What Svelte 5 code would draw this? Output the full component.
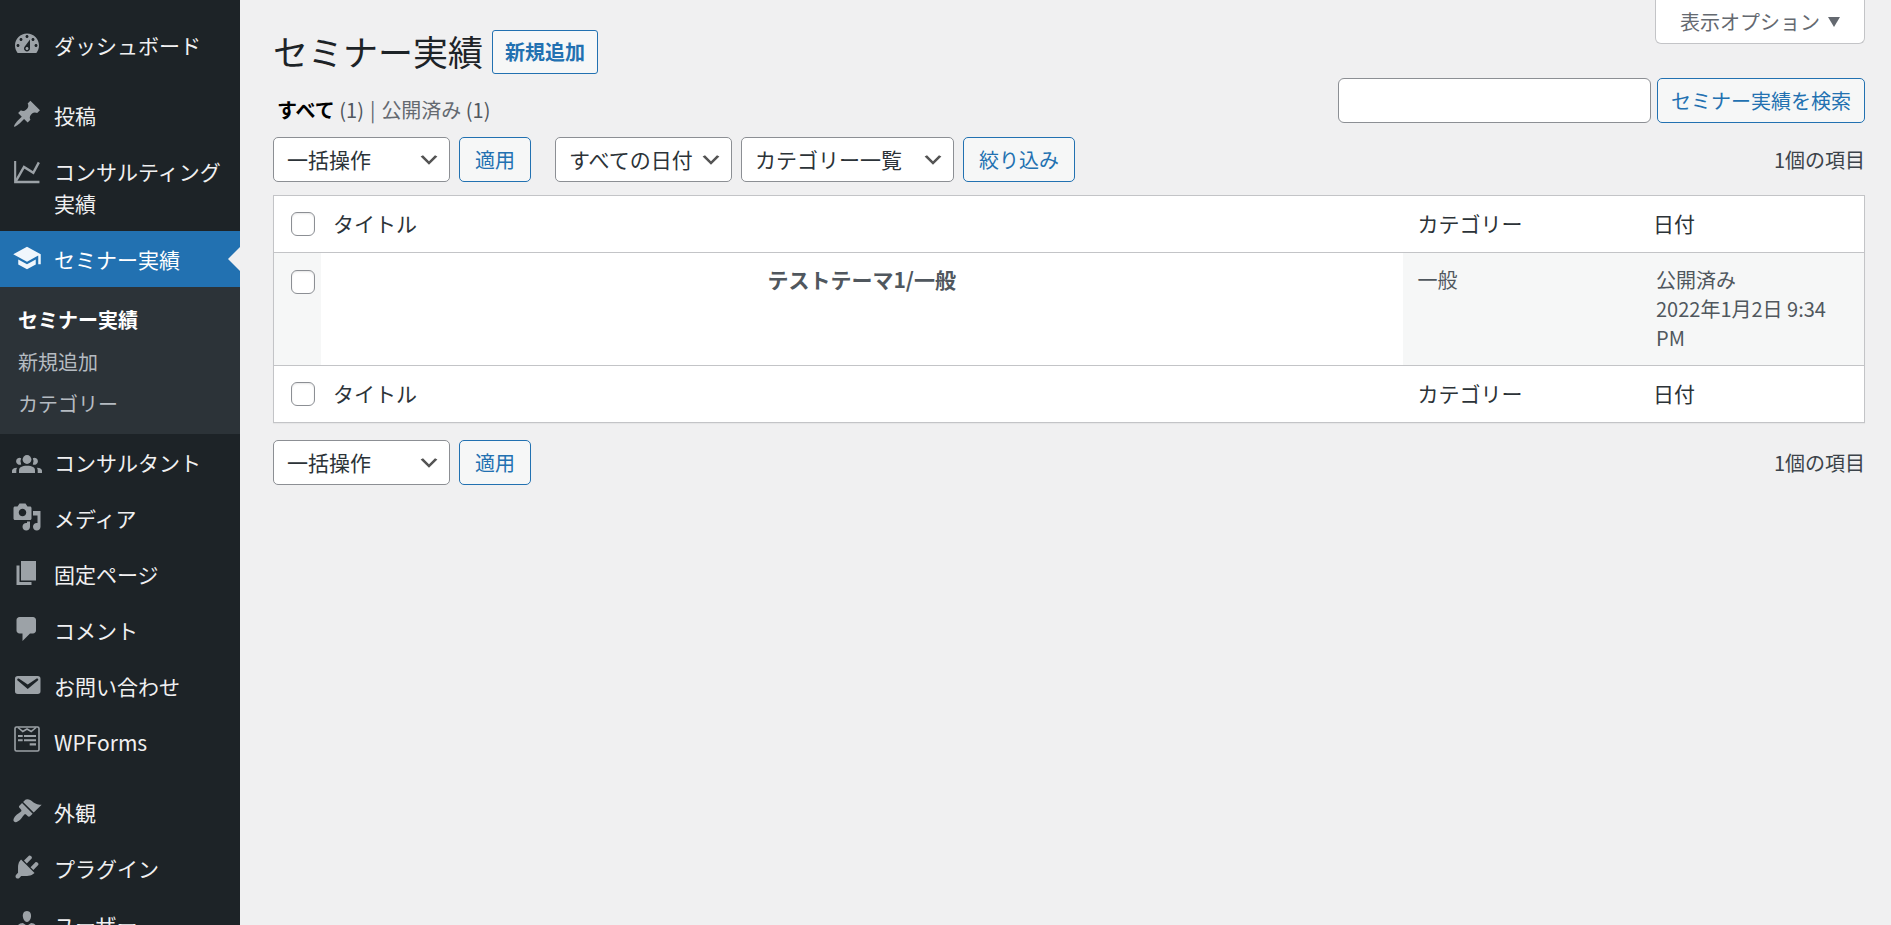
<script lang="ts">
  type MenuItem = {
    label: string;
    icon: string;
    current?: boolean;
    separated?: boolean;
  };

  const menu: MenuItem[] = [
    { label: "ダッシュボード", icon: "dashboard" },
    { label: "投稿", icon: "post", separated: true },
    { label: "コンサルティング実績", icon: "chart" },
    { label: "セミナー実績", icon: "school", current: true },
    { label: "コンサルタント", icon: "groups" },
    { label: "メディア", icon: "media" },
    { label: "固定ページ", icon: "page" },
    { label: "コメント", icon: "comment" },
    { label: "お問い合わせ", icon: "mail" },
    { label: "WPForms", icon: "forms" },
    { label: "外観", icon: "appearance", separated: true },
    { label: "プラグイン", icon: "plugin" },
    { label: "ユーザー", icon: "user" },
  ];

  const submenu = ["セミナー実績", "新規追加", "カテゴリー"];

  const paths: Record<string, string> = {
    dashboard:
      "M3.76 16h12.48c1.1-1.37 1.76-3.11 1.76-5 0-4.42-3.58-8-8-8s-8 3.58-8 8c0 1.89.66 3.63 1.76 5zM10 4c.55 0 1 .45 1 1s-.45 1-1 1-1-.45-1-1 .45-1 1-1zM6 6c.55 0 1 .45 1 1s-.45 1-1 1-1-.45-1-1 .45-1 1-1zm8 0c.55 0 1 .45 1 1s-.45 1-1 1-1-.45-1-1 .45-1 1-1zm-5.37 5.55L12 7v6c0 1.1-.9 2-2 2s-2-.9-2-2c0-.57.24-1.08.63-1.45zM4 10c.55 0 1 .45 1 1s-.45 1-1 1-1-.45-1-1 .45-1 1-1zm12 0c.55 0 1 .45 1 1s-.45 1-1 1-1-.45-1-1 .45-1 1-1zm-5 3c0-.55-.45-1-1-1s-1 .45-1 1 .45 1 1 1 1-.45 1-1z",
    post: "M10.44 3.02l1.82-1.82 6.36 6.35-1.83 1.82c-1.05-.68-2.48-.57-3.41.36l-.75.75c-.92.93-1.04 2.35-.35 3.41l-1.83 1.82-2.41-2.41-2.8 2.79c-.42.42-3.38 2.71-3.8 2.29s1.86-3.39 2.28-3.81l2.79-2.79L4.1 9.36l1.83-1.82c1.05.69 2.48.57 3.4-.36l.75-.75c.93-.92 1.05-2.35.36-3.41z",
    media:
      "M13 11V4c0-.55-.45-1-1-1h-1.67L9 1H5L3.67 3H2c-.55 0-1 .45-1 1v7c0 .55.45 1 1 1h10c.55 0 1-.45 1-1zM7 4.5c1.38 0 2.5 1.12 2.5 2.5S8.38 9.5 7 9.5 4.5 8.38 4.5 7 5.62 4.5 7 4.5zM14 6h5v10.5c0 1.38-1.12 2.5-2.5 2.5S14 17.88 14 16.5s1.12-2.5 2.5-2.5c.17 0 .34.02.5.05V9h-3V6zm-4 8.05V13h2v3.5c0 1.38-1.12 2.5-2.5 2.5S7 17.88 7 16.5 8.12 14 9.5 14c.17 0 .34.02.5.05z",
    page: "M6 15V2h10v13H6zm-1 1h8v2H3V5h2v11z",
    comment: "M5 2h9c1.1 0 2 .9 2 2v7c0 1.1-.9 2-2 2h-2l-5 5v-5H5c-1.1 0-2-.9-2-2V4c0-1.1.9-2 2-2z",
    mail: "M3.87 4h13.25C18.37 4 19 4.59 19 5.79v8.42c0 1.19-.63 1.79-1.88 1.79H3.87c-1.25 0-1.88-.6-1.88-1.79V5.79c0-1.2.63-1.79 1.88-1.79zm6.62 8.6l6.74-5.53c.24-.2.43-.66.13-1.07-.29-.41-.82-.42-1.17-.17l-5.7 3.86L4.8 5.83c-.35-.25-.88-.24-1.17.17-.3.41-.11.87.13 1.07z",
    appearance:
      "M14.48 11.06L7.41 3.99l1.5-1.5c.5-.56 2.3-.47 3.51.32 1.21.8 1.43 1.28 2.91 2.1 1.18.64 2.45 1.26 4.45.85zm-.71.71L6.7 4.7 4.93 6.47c-.39.39-.39 1.02 0 1.41l1.06 1.06c.39.39.39 1.03 0 1.42-.6.6-1.43 1.11-2.21 1.69-.35.26-.7.53-1.01.84C1.43 14.23.4 16.08 1.4 17.07c.99 1 2.84-.03 4.18-1.36.31-.31.58-.66.85-1.02.57-.78 1.08-1.61 1.69-2.21.39-.39 1.02-.39 1.41 0l1.06 1.06c.39.39 1.02.39 1.41 0z",
    plugin:
      "M13.11 4.36L9.87 7.6 8 5.73l3.24-3.24c.35-.34 1.05-.2 1.56.32.52.51.66 1.21.31 1.55zm-8 1.77l.91-1.12 9.01 9.01-1.19.84c-.71.71-2.63 1.16-3.82 1.16H6.14L4.9 17.26c-.59.59-1.54.59-2.12 0-.59-.58-.59-1.53 0-2.12l1.24-1.24v-3.88c0-1.13.4-3.19 1.09-3.89zm7.26 3.97l3.24-3.24c.34-.35 1.04-.21 1.55.31.52.51.66 1.21.31 1.55l-3.24 3.25z",
    user: "M10 9.25c-2.27 0-2.73-3.44-2.73-3.44C7 4.02 7.82 2 9.97 2c2.16 0 2.98 2.02 2.71 3.81 0 0-.41 3.44-2.68 3.44zm0 2.57L12.72 10c2.39 0 4.52 2.33 4.52 4.53v2.49s-3.65 1.13-7.24 1.13c-3.65 0-7.24-1.13-7.24-1.13v-2.49c0-2.25 1.94-4.48 4.47-4.48z",
  };

  let keyword = $state("");
  let checked = $state(false);

  const toggleAll = (event: Event): void => {
    checked = (event.currentTarget as HTMLInputElement).checked;
  };
</script>

{#snippet menuIcon(name: string)}
  {#if name === "school"}
    <svg class="icon" viewBox="0 0 24 24" aria-hidden="true">
      <path d="M5 13.18v4L12 21l7-3.82v-4L12 17l-7-3.82zM12 3L1 9l11 6 9-4.91V17h2V9L12 3z" />
    </svg>
  {:else if name === "chart"}
    <svg class="icon" viewBox="0 0 20 20" aria-hidden="true">
      <path d="M1.4 4h1.4v13.2h15.5v1.6H1.4z" />
      <path class="line" d="M2.6 17.4L8 8l6.2 3.9 3.7-7" />
    </svg>
  {:else if name === "groups"}
    <svg class="icon" viewBox="0 0 30 30" aria-hidden="true">
      <circle cx="15" cy="13.5" r="4.4" />
      <path d="M7 27v-2.6c0-3.2 2.8-4.7 8-4.7s8 1.5 8 4.7V27z" />
      <path d="M9.2 12.2a3.5 3.5 0 1 0 0 6.2 6.5 6.5 0 0 1 0-6.2zM20.8 12.2a3.5 3.5 0 1 1 0 6.2 6.5 6.5 0 0 0 0-6.2z" />
      <path d="M0 27v-2.2c0-1.8 1.4-2.9 5.2-3.1-.7.9-.9 1.8-.9 2.9V27zM30 27v-2.2c0-1.8-1.4-2.9-5.2-3.1.7.9.9 1.8.9 2.9V27z" />
    </svg>
  {:else if name === "forms"}
    <svg class="icon" viewBox="0 0 30 30" aria-hidden="true">
      <rect class="line" x="3" y="1" width="24" height="24" rx="1.5" />
      <path class="line" d="M6 1.5l4.8 4L15 3l4.2 2.5 4.8-4" />
      <path d="M6 9h4.7v2H6zM12 9h12v2H12zM6 13.2h4.7v2H6zM12 13.2h12v2H12zM17.7 17.2H24v2.2h-6.3z" />
    </svg>
  {:else}
    <svg class="icon" viewBox="0 0 20 20" aria-hidden="true">
      <path d={paths[name]} />
    </svg>
  {/if}
{/snippet}

{#snippet bulkActions(position: string)}
  <select class="select" aria-label="一括操作を選択 ({position})">
    <option>一括操作</option>
  </select>
  <button type="button" class="button">適用</button>
{/snippet}

{#snippet headings(position: string)}
  <tr>
    <th class="check"><input type="checkbox" aria-label="すべて選択 ({position})" {checked} onchange={toggleAll} /></th>
    <th class="sortable title" scope="col"><a href="#title">タイトル</a></th>
    <th class="category" scope="col">カテゴリー</th>
    <th class="sortable date" scope="col"><a href="#date">日付</a></th>
  </tr>
{/snippet}

<div class="admin">
  <nav class="sidebar" aria-label="メインメニュー">
    <ul class="menu">
      {#each menu as item}
        <li class:separated={item.separated}>
          <a class="menu-link" class:current={item.current} href="#{item.icon}">
            {@render menuIcon(item.icon)}
            <span>{item.label}</span>
          </a>
          {#if item.current}
            <ul class="submenu">
              {#each submenu as label, i}
                <li><a class:active={i === 0} href="#sub-{i}">{label}</a></li>
              {/each}
            </ul>
          {/if}
        </li>
      {/each}
    </ul>
  </nav>

  <main class="content">
    <header class="top">
      <div class="heading">
        <h1>セミナー実績</h1>
        <a class="add-new" href="#new">新規追加</a>
      </div>
      <button type="button" class="screen-options">
        表示オプション
        <svg viewBox="0 0 12 10" aria-hidden="true"><path d="M0 0h12L6 10z" /></svg>
      </button>
    </header>

    <div class="subhead">
      <ul class="views">
        <li><a class="all" href="#all">すべて <span>(1)</span></a></li>
        <li>|</li>
        <li><a href="#publish">公開済み <span>(1)</span></a></li>
      </ul>
      <form class="search" onsubmit={(event) => event.preventDefault()}>
        <input type="search" aria-label="セミナー実績を検索" bind:value={keyword} />
        <button type="submit" class="button">セミナー実績を検索</button>
      </form>
    </div>

    <div class="tablenav">
      {@render bulkActions("上")}
      <div class="filters">
        <select class="select" aria-label="日付で絞り込む">
          <option>すべての日付</option>
        </select>
        <select class="select wide" aria-label="カテゴリーで絞り込む">
          <option>カテゴリー一覧</option>
        </select>
        <button type="button" class="button">絞り込み</button>
      </div>
      <span class="count">1個の項目</span>
    </div>

    <table class="list">
      <thead>{@render headings("上")}</thead>
      <tbody>
        <tr>
          <td class="check"><input type="checkbox" aria-label="テストテーマ1/一般を選択" bind:checked /></td>
          <td class="title"><strong>テストテーマ1/一般</strong></td>
          <td><a href="#general">一般</a></td>
          <td>公開済み<br />2022年1月2日 9:34 PM</td>
        </tr>
      </tbody>
      <tfoot>{@render headings("下")}</tfoot>
    </table>

    <div class="tablenav bottom">
      {@render bulkActions("下")}
      <span class="count">1個の項目</span>
    </div>
  </main>
</div>

<style>
  :global(body) {
    margin: 0;
    background: #f0f0f1;
  }

  .admin {
    display: flex;
    min-height: 100vh;
    color: #3c434a;
    font-family: "Noto Sans CJK JP", sans-serif;
    font-size: 20px;
    line-height: 29px;
  }

  .admin * {
    box-sizing: border-box;
  }

  ul {
    margin: 0;
    padding: 0;
    list-style: none;
  }

  a {
    color: inherit;
    text-decoration: none;
  }

  /* sidebar */
  .sidebar {
    position: sticky;
    top: 0;
    flex: 0 0 240px;
    height: 100vh;
    overflow-y: auto;
    scrollbar-width: none;
    background: #1d2327;
  }

  .menu {
    padding-top: 17px;
  }

  .separated {
    margin-top: 14px;
  }

  .menu-link {
    position: relative;
    display: flex;
    gap: 12px;
    padding: 12px;
    color: #f0f0f1;
    font-size: 21px;
    line-height: 32px;
  }

  .menu-link.current {
    background: #2271b1;
    color: #fff;
  }

  .menu-link.current::after {
    content: "";
    position: absolute;
    top: 16px;
    right: 0;
    border: 12px solid transparent;
    border-left-width: 0;
    border-right-color: #f0f0f1;
  }

  .icon {
    flex: none;
    width: 30px;
    height: 30px;
    fill: #9ca2a7;
  }

  .current .icon {
    fill: #f0f6fc;
  }

  .icon .line {
    fill: none;
    stroke: #9ca2a7;
    stroke-width: 1.6;
  }

  .submenu {
    padding: 12px 0 9px;
    background: #2c3338;
  }

  .submenu a {
    display: block;
    padding: 0 18px;
    color: #b5bbc1;
    line-height: 42px;
  }

  .submenu a.active {
    color: #fff;
    font-weight: 700;
  }

  /* content */
  .content {
    flex: 1;
    min-width: 0;
    padding: 0 26px 0 33px;
  }

  .top {
    display: flex;
    align-items: flex-start;
    justify-content: space-between;
    min-height: 78px;
  }

  .heading {
    display: flex;
    align-items: flex-start;
    gap: 9px;
    padding-top: 30px;
  }

  h1 {
    margin: 0;
    color: #1d2327;
    font-size: 35px;
    font-weight: 400;
    line-height: 42px;
  }

  .add-new {
    padding: 0 12px;
    border: 1px solid #2271b1;
    border-radius: 3px;
    background: #f6f7f7;
    color: #2271b1;
    font-weight: 700;
    line-height: 42px;
  }

  .screen-options {
    display: flex;
    align-items: center;
    gap: 8px;
    height: 44px;
    padding: 0 24px;
    border: 1px solid #c3c4c7;
    border-top: 0;
    border-radius: 0 0 6px 6px;
    background: #fff;
    color: #646970;
    font: inherit;
  }

  .screen-options svg {
    width: 12px;
    height: 10px;
    fill: #646970;
  }

  .subhead {
    display: flex;
    align-items: flex-end;
    justify-content: space-between;
  }

  .views {
    display: flex;
    gap: 6px;
    padding-left: 4px;
    color: #646970;
    line-height: 26px;
  }

  .views .all {
    color: #000;
    font-weight: 700;
  }

  .views span {
    color: #50575e;
    font-weight: 400;
  }

  .search {
    display: flex;
    gap: 6px;
  }

  .search input {
    width: 313px;
    height: 45px;
    padding: 0 12px;
    border: 1px solid #8c8f94;
    border-radius: 6px;
    background: #fff;
    color: #2c3338;
    font: inherit;
  }

  .button {
    height: 45px;
    padding: 0 15px;
    border: 1px solid #2271b1;
    border-radius: 5px;
    background: #f6f7f7;
    color: #2271b1;
    font: inherit;
    cursor: pointer;
  }

  .search .button {
    padding: 0 13px;
  }

  .tablenav {
    display: flex;
    align-items: center;
    gap: 9px;
    padding: 14px 0 13px;
  }

  .tablenav.bottom {
    padding-top: 17px;
  }

  .filters {
    display: flex;
    gap: 9px;
    margin-left: 15px;
  }

  .select {
    appearance: none;
    width: 177px;
    height: 45px;
    padding: 0 36px 0 13px;
    border: 1px solid #8c8f94;
    border-radius: 5px;
    background: #fff
      url("data:image/svg+xml,%3Csvg xmlns='http://www.w3.org/2000/svg' viewBox='0 0 20 20'%3E%3Cpath d='M5 6l5 5 5-5 2 1-7 7-7-7 2-1z' fill='%23555'/%3E%3C/svg%3E")
      no-repeat right 8px center / 24px 24px;
    color: #2c3338;
    font: inherit;
    font-size: 21px;
  }

  .select.wide {
    width: 213px;
  }

  .count {
    margin-left: auto;
  }

  /* list table */
  .list {
    width: 100%;
    border: 1px solid #c3c4c7;
    border-spacing: 0;
    background: #fff;
    box-shadow: 0 1px 1px rgba(0, 0, 0, 0.04);
    table-layout: fixed;
  }

  th {
    height: 57px;
    padding: 0 15px 2px;
    color: #2c3338;
    font-size: 21px;
    font-weight: 400;
    text-align: left;
  }

  thead th {
    border-bottom: 1px solid #c3c4c7;
  }

  tfoot th {
    border-top: 1px solid #c3c4c7;
  }

  th.sortable {
    padding: 0 12px 2px;
  }

  th.category {
    width: 15%;
  }

  th.date {
    width: 223px;
  }

  td {
    padding: 12px 15px 13px;
    background: #f6f7f7;
    color: #50575e;
    vertical-align: top;
  }

  td.title {
    background: #fff;
    font-size: 21px;
    text-align: center;
  }

  .check {
    width: 47px;
    padding: 0 0 0 17px;
  }

  td.check {
    padding-top: 17px;
  }

  .check input {
    appearance: none;
    display: block;
    width: 24px;
    height: 24px;
    margin: 0;
    border: 1px solid #8c8f94;
    border-radius: 6px;
    background: #fff;
    box-shadow: inset 0 1px 2px rgba(0, 0, 0, 0.1);
  }

  .check input:checked {
    background: #2271b1;
  }
</style>
